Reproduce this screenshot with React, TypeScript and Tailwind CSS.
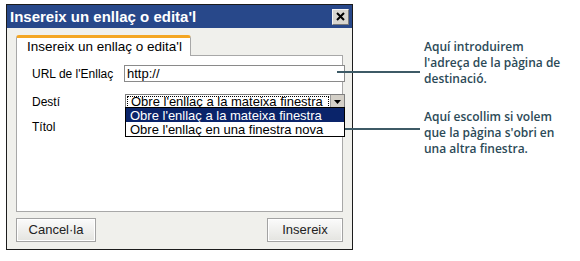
import React from "react";

const Row = ({ label, children }: { label: string; children?: React.ReactNode }) => (
  <div className="flex items-center h-[17px]">
    <span className="w-[92px] shrink-0 text-[12px] text-black">{label}</span>
    {children}
  </div>
);

const Button = ({ label, width }: { label: string; width: string }) => (
  <button
    className={`${width} h-[24px] border border-[#a3a3a3] bg-gradient-to-b from-[#fbfbfb] to-[#e4e4e0] shadow-[inset_0_0_0_1px_#ffffff] text-[13px] text-[#222] flex items-center justify-center`}
  >
    {label}
  </button>
);

export default function App() {
  return (
    <div className="relative w-[580px] h-[261px] bg-white overflow-hidden font-['Liberation_Sans',Arial,sans-serif]">
      <div className="flex">
        {/* dialog */}
        <div className="ml-[6px] mt-[4px] w-[347px] h-[246px] border border-[#1c1c1c] bg-[#f0f0ec] flex flex-col">
          <div className="h-[23px] bg-[#28488a] flex items-center justify-between pl-[3px] pr-[3px]">
            <span className="text-white font-bold text-[15px] leading-none">Insereix un enllaç o edita'l</span>
            <div className="w-[17px] h-[16px] bg-[#d8d6d0] border border-[#f4f4f4] border-r-[#7a7a7a] border-b-[#7a7a7a] flex items-center justify-center">
              <svg width="9" height="9" viewBox="0 0 9 9">
                <path d="M1 1 L8 8 M8 1 L1 8" stroke="#000" strokeWidth="2" />
              </svg>
            </div>
          </div>

          <div className="flex-1 flex flex-col px-[9px] pt-[7px]">
            {/* tab */}
            <div className="w-[175px] h-[21px] bg-white border border-[#a8a8a8] border-b-0 border-t-[3px] border-t-[#f4a623] rounded-t-[3px] flex items-center pl-[10px] text-[13.5px] text-black relative z-10 -mb-px whitespace-nowrap">
              Insereix un enllaç o edita'l
            </div>
            {/* panel */}
            <div className="relative w-[327px] h-[157px] bg-white border border-[#a8a8a8] pl-[15px] pt-[9px] flex flex-col">
              <Row label="URL de l'Enllaç">
                <div className="w-[221px] h-[17px] shrink-0 border border-[#8a8a8a] bg-white flex items-center pl-[2px] text-[13px] text-black">
                  http://
                </div>
              </Row>
              <div className="mt-[11px]">
                <Row label="Destí">
                  <div className="ml-[1px] w-[220px] h-[16px] shrink-0 border border-[#7f7f7f] bg-white flex items-stretch">
                    <div className="flex-1 flex items-stretch p-[1px]">
                      <span className="flex-1 flex items-center border border-dotted border-black leading-[12px] px-[3px] text-[13px] text-black whitespace-nowrap">
                        Obre l'enllaç a la mateixa finestra
                      </span>
                    </div>
                    <div className="w-[14px] bg-[#d4d0c8] border-l border-[#9a9a9a] flex items-center justify-center">
                      <svg width="7" height="4" viewBox="0 0 7 4">
                        <path d="M0 0 H7 L3.5 4 Z" fill="#000" />
                      </svg>
                    </div>
                  </div>
                </Row>
              </div>
              <div className="mt-[8px]">
                <Row label="Títol" />
              </div>

              {/* open dropdown */}
              <div className="absolute left-[108px] top-[51px] w-[220px] border border-black bg-white z-20 text-[13px]">
                <div className="h-[14px] bg-[#0a246a] text-white flex items-center pl-[4px] leading-none whitespace-nowrap">
                  Obre l'enllaç a la mateixa finestra
                </div>
                <div className="h-[14px] text-black flex items-center pl-[4px] leading-none whitespace-nowrap">
                  Obre l'enllaç en una finestra nova
                </div>
              </div>
            </div>

            {/* buttons */}
            <div className="flex justify-between w-[327px] mt-[6px]">
              <Button label="Cancel·la" width="w-[80px]" />
              <Button label="Insereix" width="w-[76px]" />
            </div>
          </div>
        </div>

        {/* annotations */}
        <div className="ml-[71px] flex flex-col font-['Open_Sans',sans-serif] font-semibold text-[12px] leading-[16px] text-[#2c4a57] whitespace-nowrap">
          <div className="mt-[39px]">
            Aquí introduirem
            <br />
            l'adreça de la pàgina de
            <br />
            destinació.
          </div>
          <div className="mt-[22px]">
            Aquí escollim si volem
            <br />
            que la pàgina s'obri en
            <br />
            una altra finestra.
          </div>
        </div>
      </div>

      {/* pointer lines */}
      <div className="absolute left-[337px] top-[71px] w-[83px] h-[2px] bg-[#3d5a66]" />
      <div className="absolute left-[337px] top-[128px] w-[83px] h-[2px] bg-[#3d5a66]" />
    </div>
  );
}
